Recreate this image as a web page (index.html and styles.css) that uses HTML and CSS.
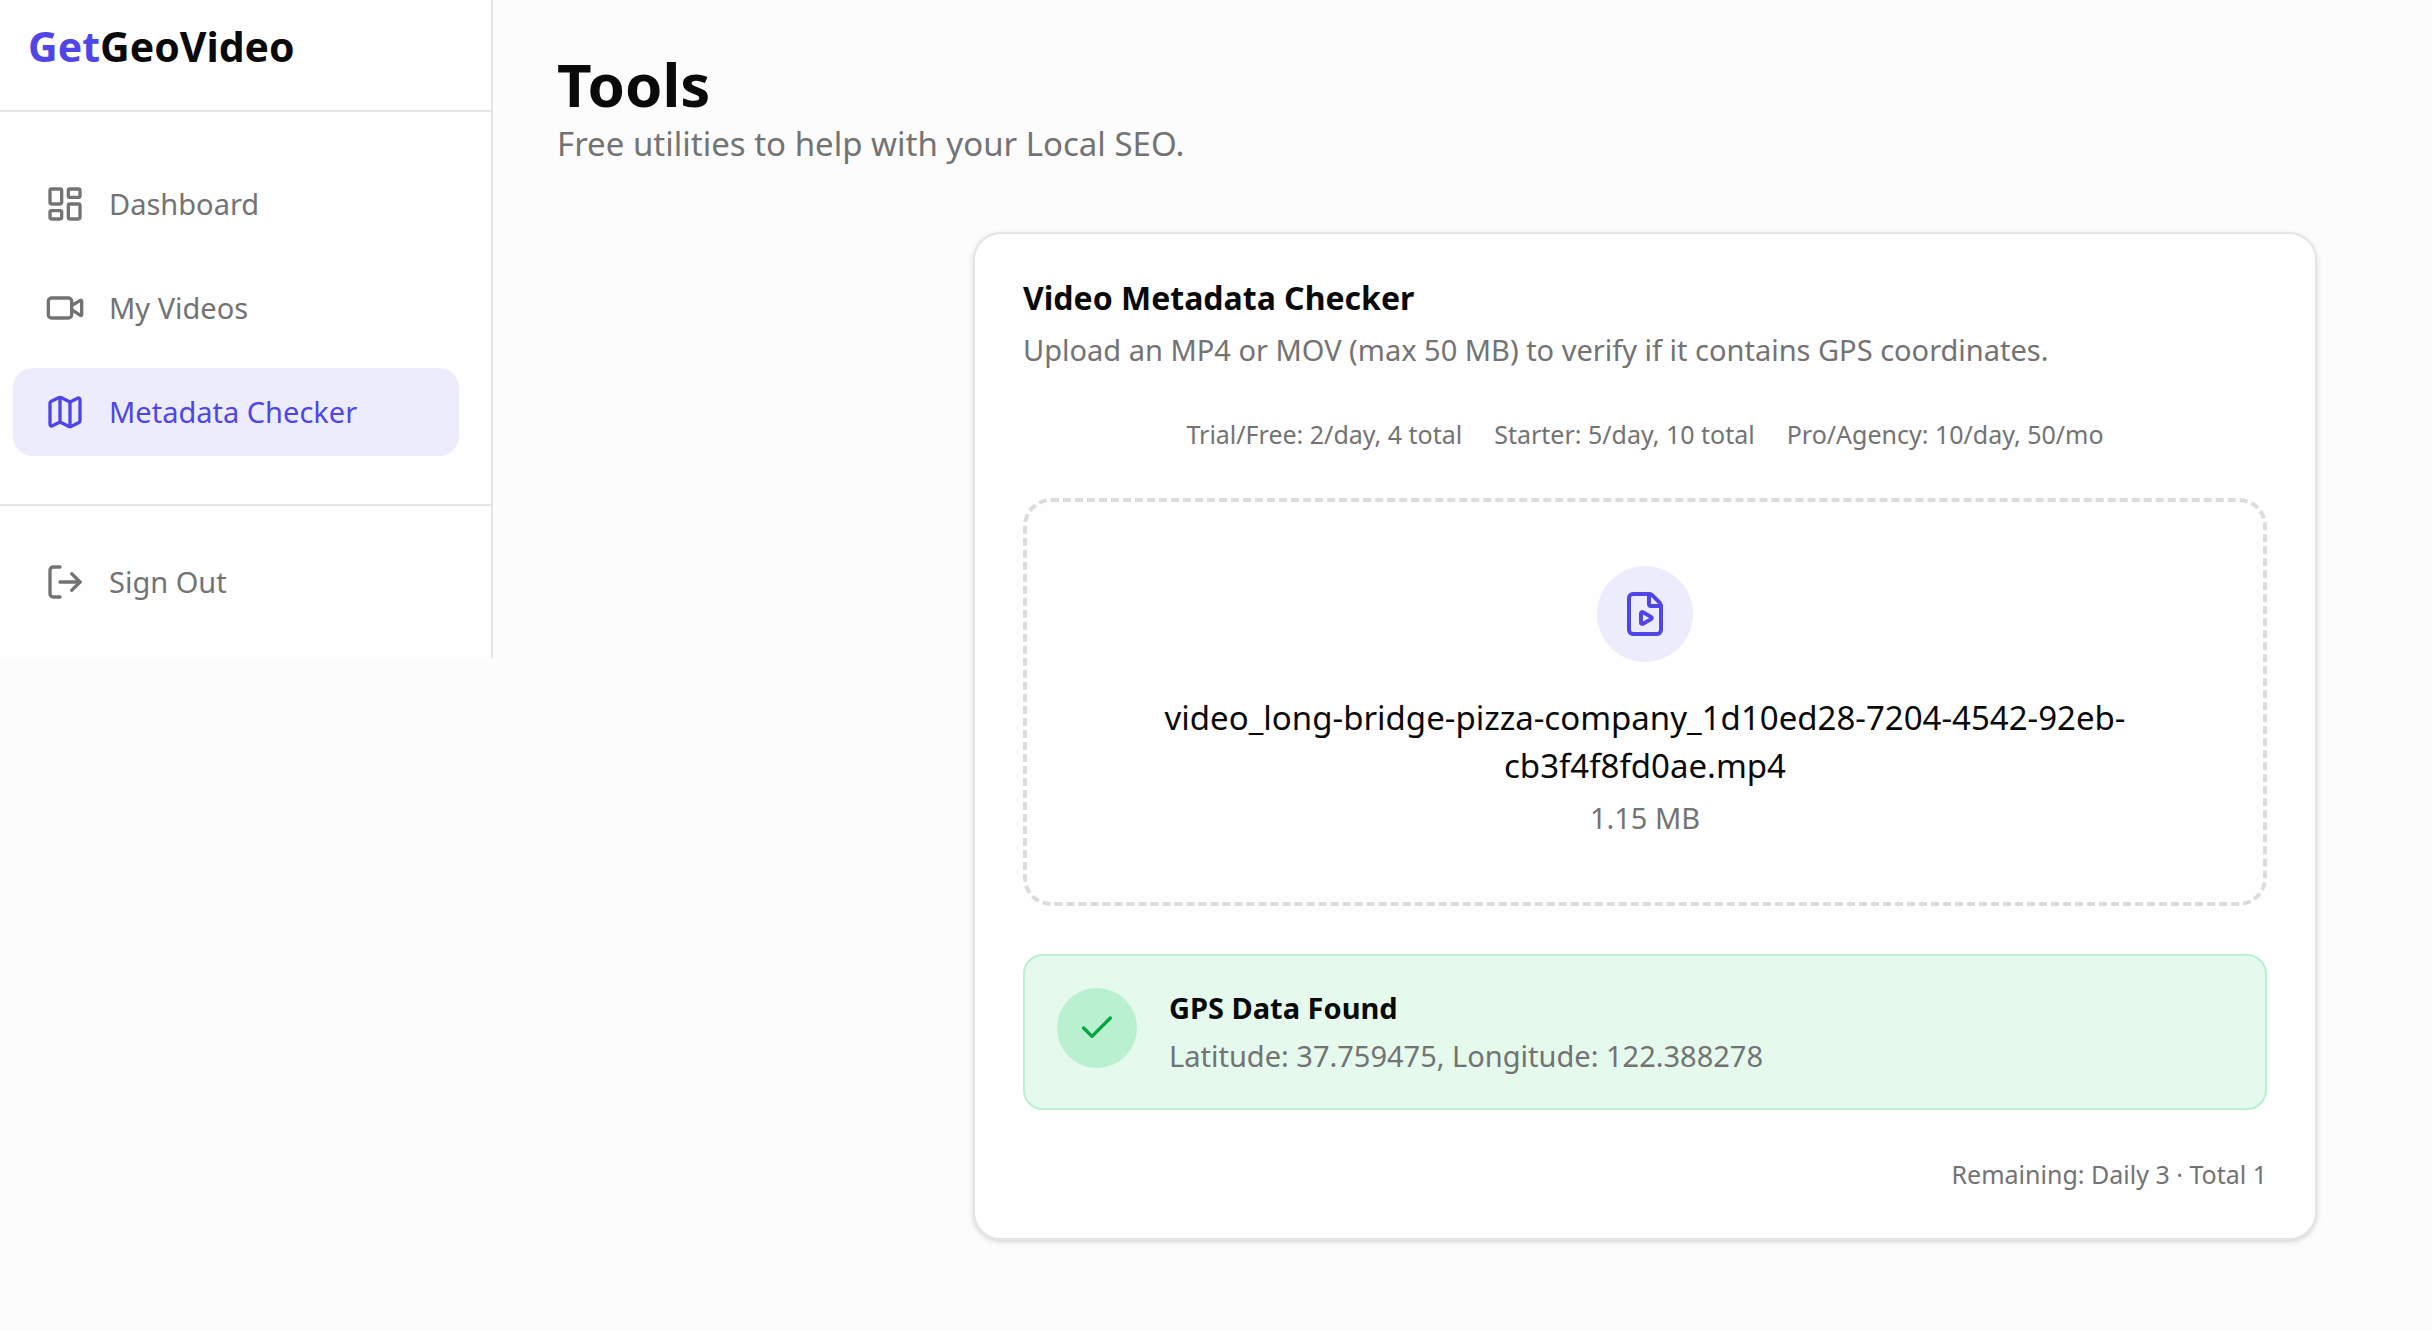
FILE: index.html
```html
<!DOCTYPE html>
<html lang="en">
<head>
    <meta charset="UTF-8">
    <meta name="viewport" content="width=device-width, initial-scale=1.0">
    <title>GetGeoVideo - Tools</title>
    <link rel="stylesheet" href="styles.css">
</head>
<body>
<div class="layout">
    <aside class="sidebar">
        <div class="sidebar-header">
            <a href="#" class="logo"><span class="logo-accent">Get</span>GeoVideo</a>
        </div>
        <nav class="sidebar-nav">
            <a href="#" class="nav-link">
                <svg class="icon" viewBox="0 0 24 24"><rect width="7" height="9" x="3" y="3" rx="1"/><rect width="7" height="5" x="14" y="3" rx="1"/><rect width="7" height="9" x="14" y="12" rx="1"/><rect width="7" height="5" x="3" y="16" rx="1"/></svg>
                Dashboard
            </a>
            <a href="#" class="nav-link">
                <svg class="icon" viewBox="0 0 24 24"><path d="m16 13 5.223 3.482a.5.5 0 0 0 .777-.416V7.87a.5.5 0 0 0-.752-.432L16 10.5"/><rect x="2" y="6" width="14" height="12" rx="2"/></svg>
                My Videos
            </a>
            <a href="#" class="nav-link active">
                <svg class="icon" viewBox="0 0 24 24"><path d="M14.106 5.553a2 2 0 0 0 1.788 0l3.659-1.83A1 1 0 0 1 21 4.619v12.764a1 1 0 0 1-.553.894l-4.553 2.277a2 2 0 0 1-1.788 0l-4.212-2.106a2 2 0 0 0-1.788 0l-3.659 1.83A1 1 0 0 1 3 19.381V6.618a1 1 0 0 1 .553-.894l4.553-2.277a2 2 0 0 1 1.788 0z"/><path d="M15 5.764v15"/><path d="M9 3.236v15"/></svg>
                Metadata Checker
            </a>
        </nav>
        <div class="sidebar-footer">
            <button type="button" class="nav-link">
                <svg class="icon" viewBox="0 0 24 24"><path d="m16 17 5-5-5-5"/><path d="M21 12H9"/><path d="M9 21H5a2 2 0 0 1-2-2V5a2 2 0 0 1 2-2h4"/></svg>
                Sign Out
            </button>
        </div>
    </aside>

    <main class="content">
        <header class="page-header">
            <h1>Tools</h1>
            <p>Free utilities to help with your Local SEO.</p>
        </header>

        <section class="card">
            <div class="card-header">
                <h2>Video Metadata Checker</h2>
                <p>Upload an MP4 or MOV (max 50 MB) to verify if it contains GPS coordinates.</p>
            </div>

            <div class="limits">
                <span>Trial/Free: 2/day, 4 total</span>
                <span>Starter: 5/day, 10 total</span>
                <span>Pro/Agency: 10/day, 50/mo</span>
            </div>

            <label class="dropzone" for="videoFile">
                <input type="file" id="videoFile" class="file-input" accept=".mp4,.mov">
                <span class="dropzone-icon">
                    <svg class="icon" viewBox="0 0 24 24"><path d="M6 22a2 2 0 0 1-2-2V4a2 2 0 0 1 2-2h8a2.4 2.4 0 0 1 1.704.706l3.588 3.588A2.4 2.4 0 0 1 20 8v12a2 2 0 0 1-2 2z"/><path d="M14 2v5a1 1 0 0 0 1 1h5"/><path d="M15.033 13.44a.647.647 0 0 1 0 1.12l-4.065 2.352a.645.645 0 0 1-.968-.56v-4.704a.645.645 0 0 1 .967-.56z"/></svg>
                </span>
                <span class="file-name">video_long-bridge-pizza-company_1d10ed28-7204-4542-92eb-cb3f4f8fd0ae.mp4</span>
                <span class="file-size">1.15 MB</span>
            </label>

            <div class="result">
                <div class="result-icon">
                    <svg class="icon" viewBox="0 0 24 24"><path d="M20 6 9 17l-5-5"/></svg>
                </div>
                <div class="result-text">
                    <h3>GPS Data Found</h3>
                    <p>Latitude: 37.759475, Longitude: 122.388278</p>
                </div>
            </div>

            <p class="remaining">Remaining: Daily 3 · Total 1</p>
        </section>
    </main>
</div>
</body>
</html>
```
FILE: styles.css
```css
* {
    box-sizing: border-box;
}

body {
    margin: 0;
    font-family: "Segoe UI", "Noto Sans", sans-serif;
    font-size: 29px;
    line-height: 40px;
    color: #0a0a0a;
    background-color: #fcfcfc;
}

h1, h2, h3, p {
    margin: 0;
}

.layout {
    display: flex;
    align-items: flex-start;
}

.icon {
    width: 40px;
    height: 40px;
    flex-shrink: 0;
    fill: none;
    stroke: currentColor;
    stroke-width: 2;
    stroke-linecap: round;
    stroke-linejoin: round;
}

/* Sidebar */
.sidebar {
    width: 493px;
    flex-shrink: 0;
    background-color: #fefefe;
    border-right: 2px solid #e5e5e5;
}

.sidebar-header {
    padding: 18px 28px 36px;
    border-bottom: 2px solid #e5e5e5;
}

.logo {
    display: block;
    font-size: 41px;
    line-height: 56px;
    font-weight: 700;
    color: #0a0a0a;
    text-decoration: none;
}

.logo-accent {
    color: #4f46e5;
}

.sidebar-nav {
    display: flex;
    flex-direction: column;
    gap: 16px;
    padding: 48px 32px 48px 13px;
}

.sidebar-footer {
    padding: 32px 32px 32px 13px;
    border-top: 2px solid #e5e5e5;
}

.nav-link {
    display: flex;
    align-items: center;
    gap: 24px;
    width: 100%;
    padding: 24px 32px;
    border: none;
    border-radius: 20px;
    background: none;
    font: inherit;
    color: #737373;
    text-align: left;
    text-decoration: none;
    cursor: pointer;
}

.nav-link.active {
    background-color: #edecfc;
    color: #4f46e5;
}

/* Main content */
.content {
    flex: 1;
    min-width: 0;
    padding: 48px 115px 88px 64px;
}

.page-header {
    margin-bottom: 64px;
}

.page-header h1 {
    font-size: 60px;
    line-height: 72px;
    font-weight: 700;
}

.page-header p {
    font-size: 33px;
    line-height: 48px;
    color: #737373;
}

.card {
    display: flex;
    flex-direction: column;
    gap: 48px;
    max-width: 1344px;
    margin-left: auto;
    padding: 48px;
    border: 2px solid #e5e5e5;
    border-radius: 28px;
    background-color: #fefefe;
    box-shadow: 0 2px 6px rgba(0, 0, 0, 0.1), 0 2px 4px rgba(0, 0, 0, 0.06);
}

.card-header h2 {
    margin-bottom: 16px;
    font-size: 32px;
    line-height: 32px;
    font-weight: 700;
}

.card-header p {
    color: #737373;
}

.limits {
    display: flex;
    flex-wrap: wrap;
    justify-content: center;
    gap: 8px 32px;
    font-size: 25px;
    line-height: 32px;
    color: #737373;
}

.dropzone {
    display: flex;
    flex-direction: column;
    align-items: center;
    padding: 64px;
    border: 4px dashed #dcdcdc;
    border-radius: 28px;
    text-align: center;
    cursor: pointer;
}

/* Hidden, the label around it opens the file dialog */
.file-input {
    position: absolute;
    width: 1px;
    height: 1px;
    opacity: 0;
}

.dropzone-icon {
    display: flex;
    align-items: center;
    justify-content: center;
    width: 96px;
    height: 96px;
    margin-bottom: 32px;
    border-radius: 50%;
    background-color: #edecfc;
    color: #4f46e5;
}

.dropzone-icon .icon {
    width: 48px;
    height: 48px;
}

.file-name {
    margin-bottom: 8px;
    font-size: 33px;
    line-height: 48px;
}

.file-size {
    color: #737373;
}

.result {
    display: flex;
    align-items: flex-start;
    gap: 32px;
    padding: 32px;
    border: 2px solid #b9f0cf;
    border-radius: 20px;
    background-color: #e5f9ed;
}

.result-icon {
    display: flex;
    align-items: center;
    justify-content: center;
    width: 80px;
    height: 80px;
    flex-shrink: 0;
    border-radius: 50%;
    background-color: #b9f0cf;
    color: #00a63e;
}

.result-text h3 {
    margin-bottom: 8px;
    font-size: 29px;
    line-height: 40px;
    font-weight: 700;
}

.result-text p {
    color: #737373;
}

.remaining {
    font-size: 25px;
    line-height: 32px;
    text-align: right;
    color: #737373;
}
```
